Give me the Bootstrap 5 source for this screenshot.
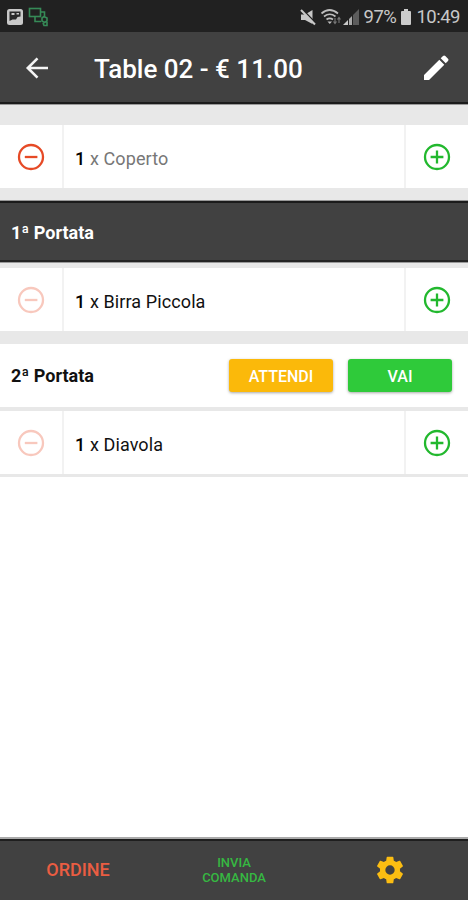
<!DOCTYPE html>
<html lang="it">
<head>
<meta charset="utf-8">
<meta name="viewport" content="width=device-width, initial-scale=1">
<title>Table 02</title>
<link href="https://cdn.jsdelivr.net/npm/bootstrap@5.3.0/dist/css/bootstrap.min.css" rel="stylesheet">
<style>
body{font-family:Roboto,"Liberation Sans",sans-serif;background:#fff;color:#111;line-height:1.2;overflow:hidden}
.screen{width:468px;height:900px}
svg{display:block;flex:none}
.status-strip{height:32px;background:#212121;color:#c8c8c8;font-size:18.500px;padding:2px 8px 0 6px}
.status-text{margin-left:4px;letter-spacing:-.5px}
.app-header{height:73px;background:#414141;color:#fff;border-bottom:1px solid #999;box-shadow:inset 0 -2px #1b1b1b;padding:0 18px 1px 24px}
.app-title{font-size:26px;font-weight:500;margin:4px 0 0 44px}
.spacer{background:#e8e8e8}
.gap-top{height:20px}
.gap-dark{height:12px}
.gap-after-dark{height:5px}
.gap-course{height:13px}
.gap-thin{height:4px}
.gap-end{height:3px}
.order-row{height:63px;background:#fff;font-size:18px;letter-spacing:.1px}
.cell-side{width:64px;border-right:2px solid #f2f2f2}
.cell-add{width:64px;border-left:2px solid #f2f2f2}
.cell-name{padding:4px 0 0 11px}
.cell-name b{font-weight:500;color:#000}
.included{color:#777}
.course{font-size:18px;font-weight:700;padding:0 15px 0 11px}
.course-dark{height:63px;background:#414141;color:#fff;border-top:1px solid #999;border-bottom:1px solid #999;box-shadow:inset 0 2px #1b1b1b,inset 0 -2px #252525;padding-top:2px}
.course-light{height:63px;background:#fff}
.action{width:104px;height:33px;border:0;border-radius:3px;color:#fff;font-size:16px;font-weight:500;padding:2px 0 0;box-shadow:0 1px 3px rgba(0,0,0,.35)}
.action-group{gap:15px;padding-right:1px}
.wait{background:#fbb90a}
.go{background:#2fca3a}
.red{color:#e64a26}
.green{color:#22b82e}
.faded{color:#f8c8bd}
.tabs{height:63px;background:#414141;border-top:2px solid #aaa;box-shadow:inset 0 2px #1e1e1e}
.tabs>*{width:156px}
.tab-order{color:#ea5d42;font-size:18px;font-weight:500;padding-top:1px}
.tab-send{color:#36b841;font-size:13px;font-weight:500;line-height:15px}
</style>
<script src="https://cdn.jsdelivr.net/npm/bootstrap@5.3.0/dist/js/bootstrap.bundle.min.js"></script>
</head>
<body>
<svg width="0" height="0" class="d-none">
<symbol id="minus" viewBox="0 0 28 28"><circle cx="14" cy="14" r="12" fill="none" stroke="currentColor" stroke-width="2.300"/><path d="M7.800 14h12.600" stroke="currentColor" stroke-width="2.300"/></symbol>
<symbol id="plus" viewBox="0 0 28 28"><circle cx="14" cy="14" r="12" fill="none" stroke="currentColor" stroke-width="2.300"/><path d="M7.600 14h12.800M14 7.600v12.800" stroke="currentColor" stroke-width="2.300"/></symbol>
</svg>
<main class="screen d-flex flex-column">
<div class="status-strip d-flex align-items-center">
<svg width="18" height="18" viewBox="0 0 18 18"><rect x="1" y="1" width="16" height="16" rx="2.500" fill="#c9c9c9"/><path d="M3.500 3.500h11v5l-3 .5-1.500 2.500H6.500L3.500 13z" fill="#292929"/><path d="M5.500 5h3v2h-3zM10.500 5H13v1.500h-2.500z" fill="#c9c9c9"/></svg>
<svg class="ms-1" width="21" height="20" viewBox="0 0 21 20" fill="none" stroke="#368a57" stroke-width="1.600"><rect x="1.500" y="1.500" width="11" height="8"/><path d="M13 5h3.500v4M7 10v4.500h6M14 11l2-1.500 3 1.500v3l-2.500 1.500L14 14zM15 16l1 2.500h3V15"/></svg>
<div class="ms-auto d-flex align-items-center">
<svg width="16" height="17" viewBox="0 0 16 17"><path d="M1 5.500h4L12.500 1v14L5 11H1z" fill="#c8c8c8"/><path d="M2 0l14 14.500" stroke="#212121" stroke-width="1.600"/><path d="M1 1l14 14.500" stroke="#c8c8c8" stroke-width="2"/></svg>
<svg class="ms-1" width="23" height="18" viewBox="0 0 23 18" fill="none" stroke="#bdbdbd" stroke-width="1.700"><path d="M1.500 5.500Q9.500-1.500 18 5.500M4 8.500q5.800-4.500 11.500 0M6.500 11.500q3.200-2.400 6.500 0"/><path d="M7.500 13.500h4.500L9.800 16z" fill="#bdbdbd" stroke="none"/><path d="M15 10v5M13.500 13.500L15 15.500l1.500-2M19 15v-5M17.500 11.500L19 9.500l1.500 2" stroke-width="1.100" stroke="#777"/></svg>
<svg width="17" height="17" viewBox="0 0 17 17"><path d="M0 16L5 11v5z" fill="#c8c8c8"/><path d="M6 10l3-3v9H6z" fill="#aaa"/><path d="M10 6l6-6v16h-6z" fill="#5c5c5c"/></svg>
<span class="status-text">97%</span>
<svg class="ms-1" width="12" height="18" viewBox="0 0 12 18"><path d="M4 1h4v2h2q1 0 1 1v12q0 1-1 1H2q-1 0-1-1V4q0-1 1-1h2z" fill="#ccc"/></svg>
<span class="status-text">10:49</span>
</div>
</div>
<header class="app-header d-flex align-items-center">
<svg width="26" height="26" viewBox="0 0 26 26" fill="none" stroke="#f5f5f5" stroke-width="2.600"><path d="M24 13H4M13.500 3.300L3.800 13l9.700 9.700"/></svg>
<h1 class="app-title">Table 02 - € 11.00</h1>
<svg class="ms-auto" width="28" height="28" viewBox="0 0 28 28" fill="#fff"><path d="M2 21L17.300 5.700l5 5L7 26H2zM18.700 4.300L21 2q1.100-1.100 2.300 0L26 4.700q1.100 1.100 0 2.300l-2.300 2.300z"/></svg>
</header>
<div class="spacer gap-top"></div>
<div class="order-row d-flex">
<div class="cell-side d-flex align-items-center justify-content-center red"><svg width="28" height="28"><use href="#minus"/></svg></div>
<div class="cell-name flex-grow-1 d-flex align-items-center"><span class="included"><b>1</b> x Coperto</span></div>
<div class="cell-add d-flex align-items-center justify-content-center green"><svg width="28" height="28"><use href="#plus"/></svg></div>
</div>
<div class="spacer gap-dark"></div>
<div class="course course-dark d-flex align-items-center">1ª Portata</div>
<div class="spacer gap-after-dark"></div>
<div class="order-row d-flex">
<div class="cell-side d-flex align-items-center justify-content-center faded"><svg width="28" height="28"><use href="#minus"/></svg></div>
<div class="cell-name flex-grow-1 d-flex align-items-center"><span><b>1</b> x Birra Piccola</span></div>
<div class="cell-add d-flex align-items-center justify-content-center green"><svg width="28" height="28"><use href="#plus"/></svg></div>
</div>
<div class="spacer gap-course"></div>
<div class="course course-light d-flex align-items-center">
<span class="me-auto">2ª Portata</span>
<div class="action-group d-flex"><button class="btn action wait">ATTENDI</button><button class="btn action go">VAI</button></div>
</div>
<div class="spacer gap-thin"></div>
<div class="order-row d-flex">
<div class="cell-side d-flex align-items-center justify-content-center faded"><svg width="28" height="28"><use href="#minus"/></svg></div>
<div class="cell-name flex-grow-1 d-flex align-items-center"><span><b>1</b> x Diavola</span></div>
<div class="cell-add d-flex align-items-center justify-content-center green"><svg width="28" height="28"><use href="#plus"/></svg></div>
</div>
<div class="spacer gap-end"></div>
<footer class="tabs mt-auto d-flex align-items-center">
<div class="tab-order text-center">ORDINE</div>
<div class="tab-send text-center">INVIA<br>COMANDA</div>
<div class="d-flex justify-content-center"><svg width="32" height="32" viewBox="0 0 24 24" fill="#fbbd12"><path d="M19.430 12.980c.04-.32.07-.64.07-.98s-.03-.66-.07-.98l2.110-1.650c.19-.15.24-.42.12-.64l-2-3.460c-.12-.22-.39-.3-.61-.22l-2.490 1c-.52-.4-1.080-.73-1.690-.98l-.38-2.650A.49.49 0 0 0 14 2h-4c-.25 0-.46.18-.49.42l-.38 2.650c-.61.25-1.170.59-1.690.98l-2.490-1c-.23-.09-.49 0-.61.22l-2 3.460c-.13.22-.07.49.12.64l2.110 1.650c-.04.32-.07.65-.07.98s.03.66.07.98l-2.110 1.650c-.19.15-.24.42-.12.64l2 3.460c.12.22.39.3.61.22l2.490-1c.52.4 1.080.73 1.690.98l.38 2.650c.03.24.24.42.49.42h4c.25 0 .46-.18.49-.42l.38-2.650c.61-.25 1.170-.59 1.690-.98l2.490 1c.23.09.49 0 .61-.22l2-3.460c.12-.22.07-.49-.12-.64zM12 15.500A3.500 3.500 0 1 1 12 8.500a3.500 3.500 0 0 1 0 7z"/></svg></div>
</footer>
</main>
</body>
</html>
